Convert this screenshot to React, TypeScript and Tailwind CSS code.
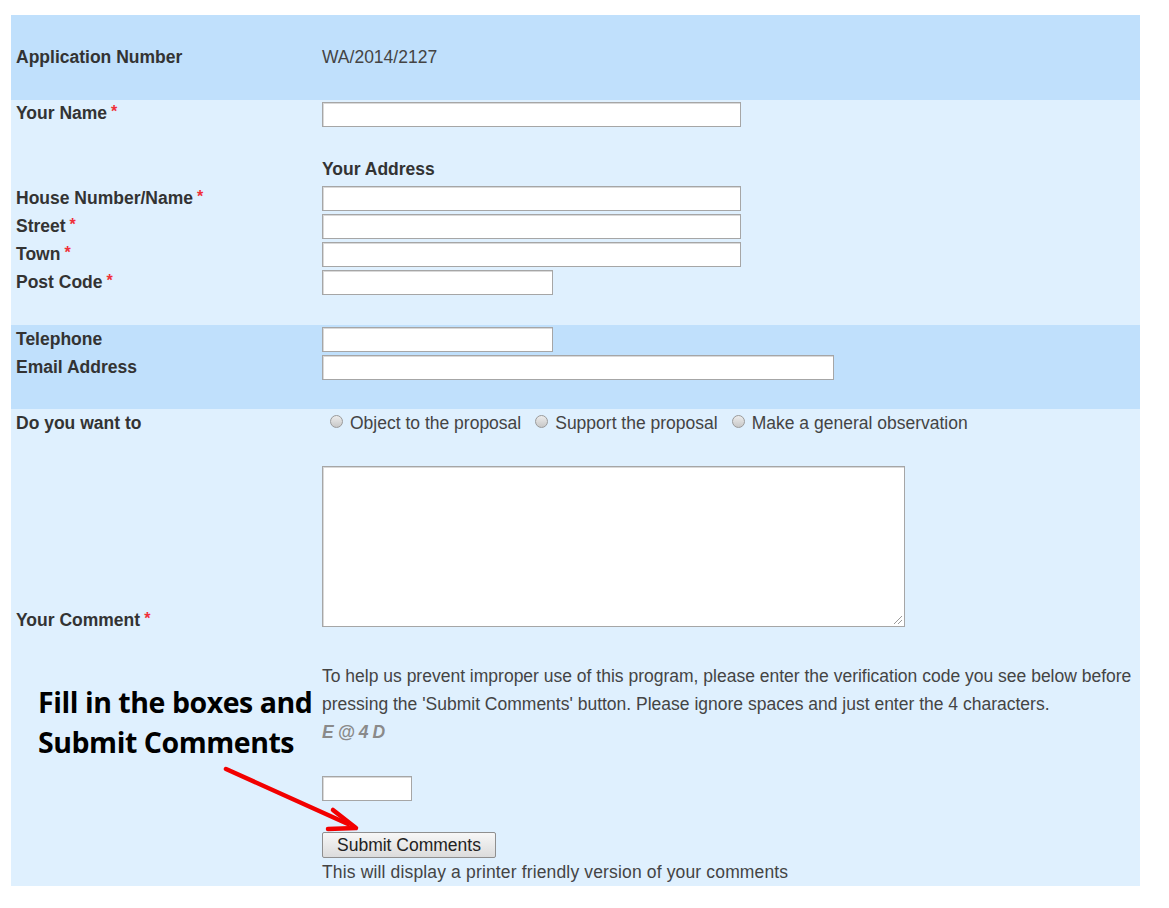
import React from "react";

const inputCls = "block h-[25px] bg-white border border-[#a6a6a6] shadow-[inset_1px_1px_0_#d9d9d9]";

function Label({ children, req }: { children: React.ReactNode; req?: boolean }) {
  return (
    <span className="font-bold text-[#333]">
      {children}
      {req && <span className="relative top-[-2px] text-[#f0303a] text-[16px] ml-[4px]">*</span>}
    </span>
  );
}

function Radio({ label }: { label: string }) {
  return (
    <span className="inline-flex items-center mr-[6px]">
      <span className="inline-block w-[13px] h-[13px] rounded-full border border-[#9a9a9a] bg-gradient-to-b from-[#ececec] to-[#c8c8c8] mr-[7px] ml-[8px] -mt-[3px]" />
      {label}
    </span>
  );
}

export default function App() {
  return (
    <div className="relative w-[1169px] h-[908px] bg-white" style={{ fontFamily: '"Liberation Sans", Arial, sans-serif' }}>
      <div className="pt-[15px] pl-[11px]">
        <div className="w-[1129px] text-[17.5px] tracking-[0px] text-[#333]">
          {/* Row 1 */}
          <div className="bg-[#c0e0fc] h-[85px] grid grid-cols-[311px_1fr] items-center">
            <div className="pl-[5px]"><Label>Application Number</Label></div>
            <div className="text-[#444]">WA/2014/2127</div>
          </div>
          {/* Name & address */}
          <div className="bg-[#dff0fe] pb-[28px]">
            <div className="grid grid-cols-[311px_1fr] pt-[2px]">
              <div className="pl-[5px] leading-[22px]"><Label req>Your Name</Label></div>
              <input className={inputCls + " w-[419px]"} />
            </div>
            <div className="grid grid-cols-[311px_1fr] mt-[31px]">
              <div />
              <div className="leading-[22px] font-bold text-[#333]">Your Address</div>
            </div>
            <div className="mt-[5px]">
              {[
                ["House Number/Name", "w-[419px]"],
                ["Street", "w-[419px]"],
                ["Town", "w-[419px]"],
                ["Post Code", "w-[231px]"],
              ].map(([l, w]) => (
                <div key={l} className="grid grid-cols-[311px_1fr] h-[28px]">
                  <div className="pl-[5px] leading-[26px]"><Label req>{l}</Label></div>
                  <div className="pt-[1px]"><input className={inputCls + " " + w} /></div>
                </div>
              ))}
            </div>
          </div>
          {/* Contact */}
          <div className="bg-[#c0e0fc] pt-[1px] pb-[27px]">
            {[
              ["Telephone", "w-[231px]"],
              ["Email Address", "w-[512px]"],
            ].map(([l, w]) => (
              <div key={l} className="grid grid-cols-[311px_1fr] h-[28px]">
                <div className="pl-[5px] leading-[26px]"><Label>{l}</Label></div>
                <div className="pt-[1px]"><input className={inputCls + " " + w} /></div>
              </div>
            ))}
          </div>
          {/* Comment */}
          <div className="bg-[#dff0fe] pt-[3px] pb-[1px]">
            <div className="grid grid-cols-[311px_1fr] leading-[22px]">
              <div className="pl-[5px]"><Label>Do you want to</Label></div>
              <div className="flex items-center text-[#444]">
                <Radio label="Object to the proposal" />
                <Radio label="Support the proposal" />
                <Radio label="Make a general observation" />
              </div>
            </div>
            <div className="grid grid-cols-[311px_1fr] mt-[32px]">
              <div className="pl-[5px] self-end leading-[22px] -mb-[1px]"><Label req>Your Comment</Label></div>
              <div className="pb-[4px]">
                <div className="relative w-[583px] h-[161px] bg-white border border-[#a6a6a6] shadow-[inset_1px_1px_0_#d9d9d9]">
                  <svg className="absolute right-[1px] bottom-[1px]" width="12" height="12" viewBox="0 0 12 12">
                    <path d="M11 3 L3 11 M11 7 L7 11" stroke="#9a9a9a" strokeWidth="1" />
                  </svg>
                </div>
              </div>
            </div>
            <div className="grid grid-cols-[311px_1fr] mt-[31px]">
              <div />
              <div className="text-[#444] leading-[28px] pr-[4px]">
                <p>To help us prevent improper use of this program, please enter the verification code you see below before pressing the 'Submit Comments' button. Please ignore spaces and just enter the 4 characters.</p>
                <p className="italic font-bold text-[#8a8a8a] tracking-[4px]">E@4D</p>
                <input className={inputCls + " w-[90px] mt-[30px]"} />
                <button className="block mt-[31px] h-[26px] px-[14px] leading-[22px] text-[#222] border border-[#8f8f8f] rounded-[2px] bg-gradient-to-b from-[#f7f7f7] to-[#dcdcdc]">Submit Comments</button>
                <div className="leading-[26px] mt-[1px] tracking-[0.15px]">This will display a printer friendly version of your comments</div>
              </div>
            </div>
          </div>
        </div>
      </div>
      {/* Annotation overlay */}
      <div className="absolute left-[38px] top-[682px] text-[28.5px] leading-[40px] font-bold text-black" style={{ fontFamily: '"Open Sans", sans-serif', letterSpacing: "-0.45px" }}>
        <div>Fill in the boxes and</div>
        <div>Submit Comments</div>
      </div>
      <svg className="absolute left-0 top-0 pointer-events-none" width="1169" height="908">
        <line x1="226" y1="769" x2="348" y2="824" stroke="#f20000" strokeWidth="4.5" strokeLinecap="round" />
        <path d="M333 810 L356 828 L328 829" fill="none" stroke="#f20000" strokeWidth="4.5" strokeLinecap="round" strokeLinejoin="round" />
      </svg>
    </div>
  );
}
